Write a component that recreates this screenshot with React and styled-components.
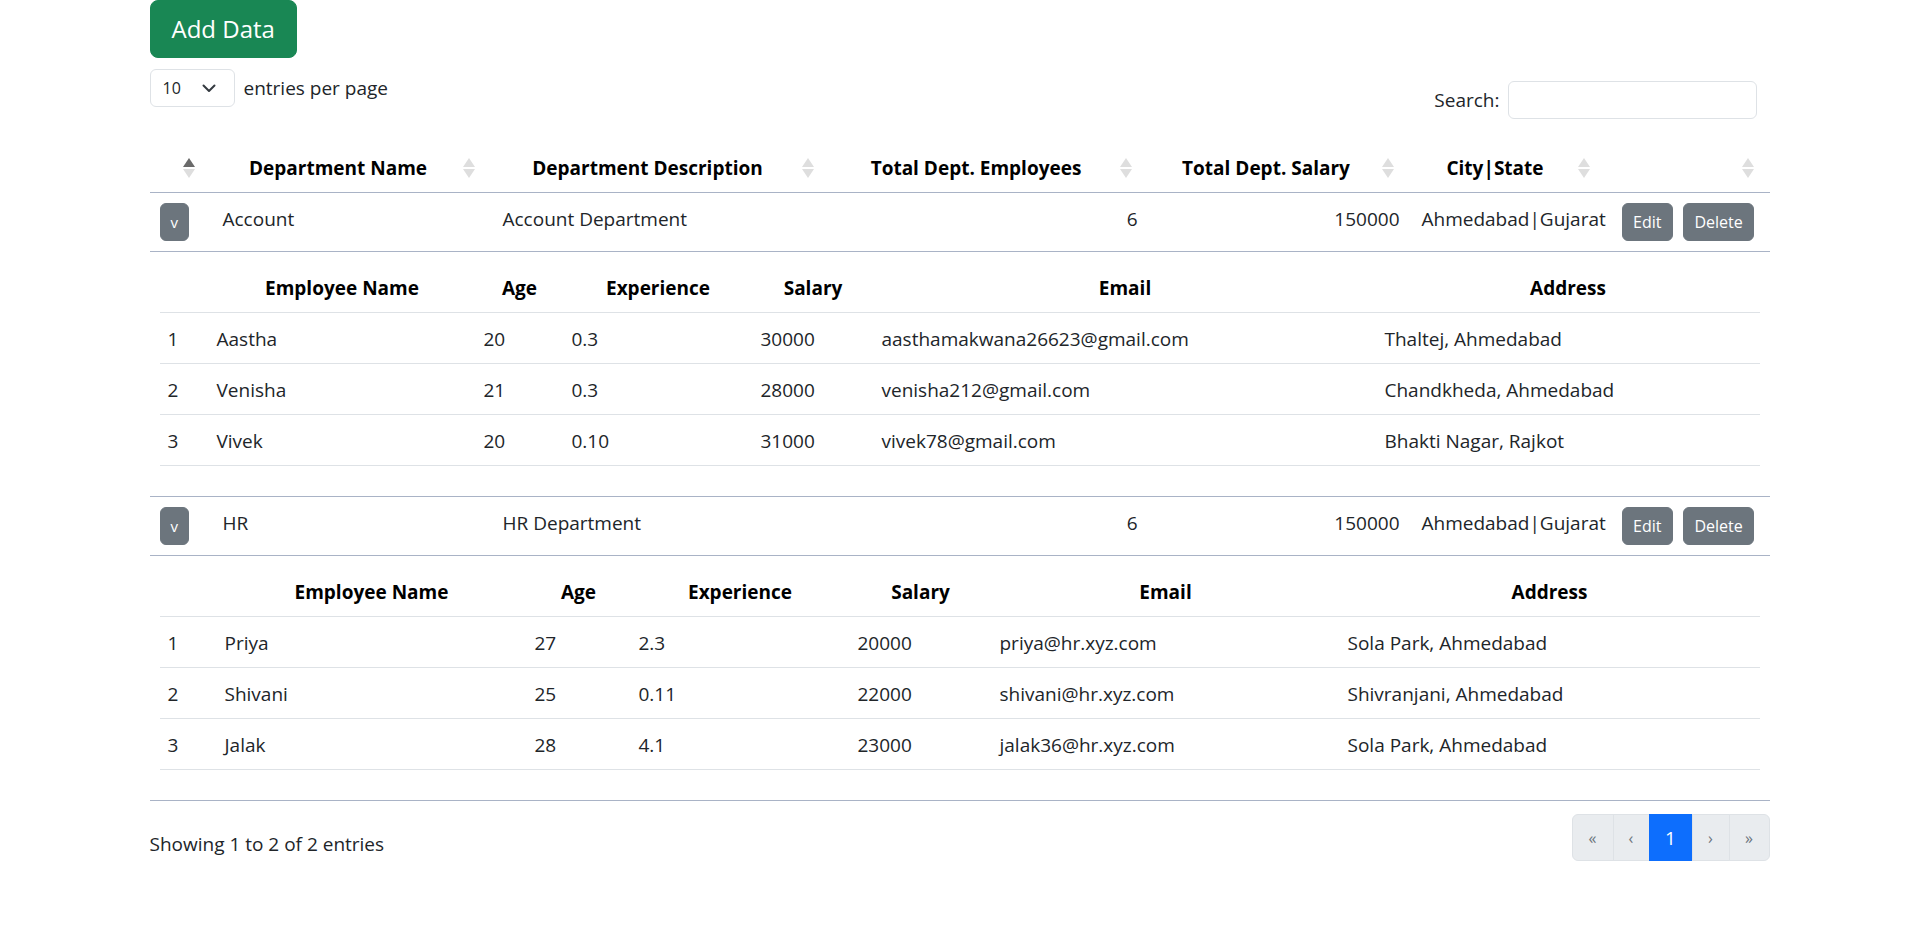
import React from 'react';
import styled, { createGlobalStyle } from 'styled-components';

const GlobalStyle = createGlobalStyle`
  * { box-sizing: border-box; }
  body {
    margin: 0;
    background: #ffffff;
    font-family: "Open Sans", "Noto Sans", sans-serif;
    font-size: 19px;
    line-height: 28px;
    color: #212529;
  }
`;

const Page = styled.div`
  width: 1620px;
  margin: 0 auto;
`;

const AddButton = styled.button`
  display: block;
  height: 58px;
  padding: 0 21px;
  background: #198754;
  color: #ffffff;
  border: 1px solid #198754;
  border-radius: 8px;
  font-family: inherit;
  font-size: 24px;
  line-height: 36px;
  cursor: pointer;
`;

const TopBar = styled.div`
  display: flex;
  justify-content: space-between;
  align-items: flex-start;
  margin-top: 11px;
`;

const LengthControl = styled.div`
  display: flex;
  align-items: center;
  gap: 9px;
`;

const SelectBox = styled.div`
  width: 85px;
  height: 38px;
  border: 1px solid #dee2e6;
  border-radius: 6px;
  display: flex;
  align-items: center;
  justify-content: space-between;
  padding: 0 18px 0 12px;
  font-size: 16px;
  color: #212529;
`;

const SearchControl = styled.label`
  display: flex;
  align-items: center;
  gap: 8px;
  margin: 12px 13px 0 0;
`;

const SearchInput = styled.input`
  width: 249px;
  height: 38px;
  border: 1px solid #dee2e6;
  border-radius: 6px;
  padding: 6px 12px;
  font-family: inherit;
  font-size: 16px;
  outline: none;
`;

const MainTable = styled.table`
  width: 100%;
  table-layout: fixed;
  border-collapse: collapse;
  margin-top: 25px;
`;

const HeadCell = styled.th`
  position: relative;
  padding: 10px 35px 10px 10px;
  text-align: center;
  font-weight: 700;
  color: #000000;
  border-bottom: 1px solid #a9b3c6;
  white-space: nowrap;
`;

const SortMark = styled.svg`
  position: absolute;
  right: 16px;
  top: 50%;
  transform: translateY(-50%);
`;

const MainRow = styled.tr`
  border-bottom: 1px solid #a9b3c6;
`;

const Cell = styled.td`
  padding: ${p => (p.$actions ? '10px 10px 10px 16px' : p.$toggle ? '10px' : '12px 10px 8px 12px')};
  vertical-align: top;
  text-align: ${p => p.$align || 'left'};
  white-space: nowrap;
`;

const DetailCell = styled.td`
  padding: 10px 10px 0 10px;
`;

const GreyButton = styled.button`
  height: 38px;
  padding: 0 ${p => (p.$small ? '10px' : '10.5px')};
  background: #6c757d;
  color: #ffffff;
  border: 1px solid #6c757d;
  border-radius: 6px;
  font-family: inherit;
  font-size: ${p => (p.$small ? '15px' : '16px')};
  line-height: 24px;
  cursor: pointer;
`;

const ButtonGroup = styled.div`
  display: flex;
  gap: 10px;
`;

const ChildTable = styled.table`
  width: 100%;
  table-layout: fixed;
  border-collapse: collapse;
  margin-bottom: 30px;
`;

const ChildHead = styled.th`
  padding: 12px 8px 10px;
  text-align: center;
  font-weight: 700;
  color: #000000;
  border-bottom: 1px solid #dee2e6;
  white-space: nowrap;
`;

const ChildCell = styled.td`
  padding: 12px 8px 10px;
  border-bottom: 1px solid #dee2e6;
  white-space: nowrap;
`;

const Footer = styled.div`
  display: flex;
  justify-content: space-between;
  align-items: flex-start;
  margin-top: 13px;
`;

const Info = styled.div`
  padding-top: 16px;
`;

const Pager = styled.nav`
  display: flex;
`;

const PageLink = styled.span`
  display: flex;
  align-items: center;
  justify-content: center;
  width: ${p => p.$w}px;
  height: 47px;
  border: 1px solid ${p => (p.$active ? '#0d6efd' : '#dee2e6')};
  margin-left: -1px;
  background: ${p => (p.$active ? '#0d6efd' : '#e9ecef')};
  color: ${p => (p.$active ? '#ffffff' : '#6c757d')};
  font-size: ${p => (p.$active ? '19px' : '16px')};
  &:first-child {
    margin-left: 0;
    border-radius: 6px 0 0 6px;
  }
  &:last-child {
    border-radius: 0 6px 6px 0;
  }
`;

const SortIcon = ({ active }) => (
  <SortMark width="12" height="20" viewBox="0 0 12 20">
    <polygon points="6,0 12,9 0,9" fill={active ? '#6a6a6a' : '#dedede'} />
    <polygon points="0,11 12,11 6,20" fill="#dedede" />
  </SortMark>
);

const mainCols = [61, 280, 339, 318, 262, 196, 164];
const mainHeads = ['', 'Department Name', 'Department Description', 'Total Dept. Employees', 'Total Dept. Salary', 'City|State', ''];
const childHeads = ['', 'Employee Name', 'Age', 'Experience', 'Salary', 'Email', 'Address'];

const departments = [
  {
    name: 'Account',
    desc: 'Account Department',
    employees: 6,
    salary: 150000,
    city: 'Ahmedabad|Gujarat',
    cols: [49, 267, 88, 189, 121, 503, 383],
    staff: [
      ['1', 'Aastha', '20', '0.3', '30000', 'aasthamakwana26623@gmail.com', 'Thaltej, Ahmedabad'],
      ['2', 'Venisha', '21', '0.3', '28000', 'venisha212@gmail.com', 'Chandkheda, Ahmedabad'],
      ['3', 'Vivek', '20', '0.10', '31000', 'vivek78@gmail.com', 'Bhakti Nagar, Rajkot'],
    ],
  },
  {
    name: 'HR',
    desc: 'HR Department',
    employees: 6,
    salary: 150000,
    city: 'Ahmedabad|Gujarat',
    cols: [57, 310, 104, 219, 142, 348, 420],
    staff: [
      ['1', 'Priya', '27', '2.3', '20000', 'priya@hr.xyz.com', 'Sola Park, Ahmedabad'],
      ['2', 'Shivani', '25', '0.11', '22000', 'shivani@hr.xyz.com', 'Shivranjani, Ahmedabad'],
      ['3', 'Jalak', '28', '4.1', '23000', 'jalak36@hr.xyz.com', 'Sola Park, Ahmedabad'],
    ],
  },
];

const pages = [
  { label: '«', w: 42 },
  { label: '‹', w: 37 },
  { label: '1', w: 44, active: true },
  { label: '›', w: 38 },
  { label: '»', w: 41 },
];

function Department({ d }) {
  return (
    <>
      <MainRow>
        <Cell $toggle>
          <GreyButton $small>v</GreyButton>
        </Cell>
        <Cell>{d.name}</Cell>
        <Cell>{d.desc}</Cell>
        <Cell $align="right">{d.employees}</Cell>
        <Cell $align="right">{d.salary}</Cell>
        <Cell>{d.city}</Cell>
        <Cell $actions>
          <ButtonGroup>
            <GreyButton>Edit</GreyButton>
            <GreyButton>Delete</GreyButton>
          </ButtonGroup>
        </Cell>
      </MainRow>
      <MainRow>
        <DetailCell colSpan={7}>
          <ChildTable>
            <colgroup>
              {d.cols.map((w, i) => (
                <col key={i} style={{ width: w }} />
              ))}
            </colgroup>
            <thead>
              <tr>
                {childHeads.map((h, i) => (
                  <ChildHead key={i}>{h}</ChildHead>
                ))}
              </tr>
            </thead>
            <tbody>
              {d.staff.map((row, r) => (
                <tr key={r}>
                  {row.map((v, i) => (
                    <ChildCell key={i}>{v}</ChildCell>
                  ))}
                </tr>
              ))}
            </tbody>
          </ChildTable>
        </DetailCell>
      </MainRow>
    </>
  );
}

export default function App() {
  return (
    <>
      <GlobalStyle />
      <Page>
        <AddButton>Add Data</AddButton>
        <TopBar>
          <LengthControl>
            <SelectBox>
              <span>10</span>
              <svg width="14" height="9" viewBox="0 0 14 9">
                <path d="M1.5 1.5 L7 7 L12.5 1.5" fill="none" stroke="#343a40" strokeWidth="2" strokeLinecap="round" strokeLinejoin="round" />
              </svg>
            </SelectBox>
            <span>entries per page</span>
          </LengthControl>
          <SearchControl>
            Search:
            <SearchInput type="search" />
          </SearchControl>
        </TopBar>
        <MainTable>
          <colgroup>
            {mainCols.map((w, i) => (
              <col key={i} style={{ width: w }} />
            ))}
          </colgroup>
          <thead>
            <tr>
              {mainHeads.map((h, i) => (
                <HeadCell key={i}>
                  {h}
                  <SortIcon active={i === 0} />
                </HeadCell>
              ))}
            </tr>
          </thead>
          <tbody>
            {departments.map(d => (
              <Department key={d.name} d={d} />
            ))}
          </tbody>
        </MainTable>
        <Footer>
          <Info>Showing 1 to 2 of 2 entries</Info>
          <Pager>
            {pages.map(p => (
              <PageLink key={p.label} $w={p.w} $active={p.active}>
                {p.label}
              </PageLink>
            ))}
          </Pager>
        </Footer>
      </Page>
    </>
  );
}
